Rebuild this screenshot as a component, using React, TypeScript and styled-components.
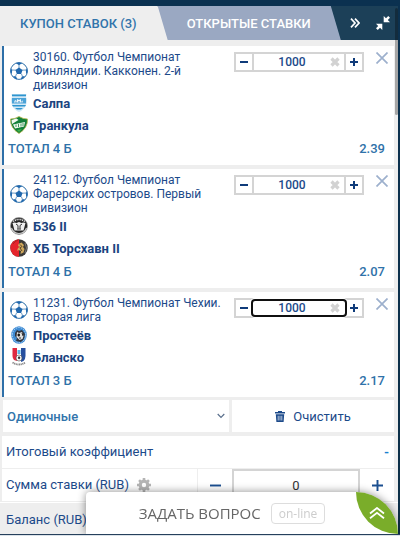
import React, { useState } from "react";
import styled, { createGlobalStyle, css } from "styled-components";

const Global = createGlobalStyle`
  * { box-sizing: border-box; }
  body { margin: 0; background: #0d3350; font-family: Roboto, "Liberation Sans", sans-serif; font-size: 13px; color: #1c4a8a; }
  button, input, select { font: inherit; color: inherit; margin: 0; padding: 0; border: 0; background: none; border-radius: 0; }
  button { cursor: pointer; }
  svg { display: block; flex: none; }
`;

const Page = styled.div`
  min-height: 100vh;
  padding: 6px 2px 0 0;
  background: linear-gradient(#0b3150, #0d3048);
  display: flex;
`;

const Panel = styled.main`
  position: relative;
  flex: 1;
  min-width: 0;
  background: #eee;
`;

const Header = styled.header`
  display: flex;
  height: 34px;
  background: #1c4058;
`;

const Tab = styled.button<{ $active?: boolean }>`
  height: ${(p) => (p.$active ? 40 : 34)}px;
  padding: ${(p) => (p.$active ? "0 31px 6px 20px" : "0 30px 0 29px")};
  margin-right: ${(p) => (p.$active ? -10 : 0)}px;
  white-space: nowrap;
  font-weight: 500;
  text-transform: uppercase;
  color: ${(p) => (p.$active ? "#3174ab" : "#fff")};
  background: ${(p) => (p.$active ? "#eee" : "#9aa8c2")};
  clip-path: polygon(0 0, calc(100% - 10px) 0, 100% 34px, 100% 100%, 0 100%);
  z-index: ${(p) => (p.$active ? 1 : 0)};
`;

const HeaderTools = styled.div`
  display: flex;
  flex: 1;
  align-items: center;
  justify-content: flex-end;
  gap: 16px;
  padding-right: 8px;
  color: #fff;
`;

const IconButton = styled.button`
  display: flex;
  align-items: center;
  justify-content: center;
`;

const ScrollThumb = styled.div`
  position: absolute;
  top: 2px;
  right: 0;
  width: 3px;
  height: 107px;
  border-radius: 2px;
  background: rgba(0, 0, 0, 0.3);
  z-index: 2;
`;

const Slip = styled.div`
  display: flex;
  flex-direction: column;
  gap: 4px;
  padding: 6px 4px 0 2px;
`;

const Card = styled.article`
  padding: 4px 6px 5px 4px;
  border-left: 2px solid #2d6fa8;
  background: #fff;
`;

const CardTop = styled.div`
  display: flex;
  align-items: flex-start;
`;

const Event = styled.div`
  display: flex;
  flex: 1;
  min-width: 0;
  align-items: center;
  gap: 5px;
  padding-left: 2px;
`;

const Title = styled.h2`
  flex: 1;
  margin: 0;
  font-size: 12px;
  line-height: 14px;
  font-weight: 400;
`;

const Stepper = styled.div`
  display: flex;
  flex: none;
  width: 130px;
  height: 20px;
  margin: 2px 12px 0 8px;
  border: 2px solid #d4d4d4;
`;

const StepButton = styled.button`
  display: flex;
  width: 16px;
  align-items: center;
  justify-content: center;
  color: #0f3b7a;
`;

const Field = styled.label<{ $focused?: boolean }>`
  display: flex;
  flex: 1;
  min-width: 0;
  align-items: center;
  padding-right: 4px;
  border: solid #d4d4d4;
  border-width: 0 2px;
  background: #fff;
  ${(p) =>
    p.$focused &&
    css`
      border-color: #fff;
      border-radius: 3px;
      outline: 2px solid #101010;
      outline-offset: -1px;
      box-shadow: 0 0 0 2px #fff;
    `}
`;

const StakeInput = styled.input`
  flex: 1;
  min-width: 0;
  text-align: center;
  font-size: 12px;
  font-weight: 500;
  line-height: 16px;
  outline: none;
`;

const CloseButton = styled(IconButton)`
  width: 12px;
  height: 12px;
  margin-top: 2px;
  color: #9db0cd;
`;

const Team = styled.div`
  display: flex;
  height: 22px;
  align-items: center;
  gap: 5px;
  padding-left: 2px;
  font-weight: 700;
  color: #1b4480;
`;

const Outcome = styled.div`
  display: flex;
  height: 24px;
  align-items: center;
  justify-content: space-between;
  padding-right: 3px;
  font-weight: 500;
  color: #2f72a9;
`;

const Actions = styled.div`
  display: grid;
  grid-template-columns: 226fr 162fr;
  gap: 3px;
  height: 32px;
  margin: -1px 0 0 1px;
`;

const SelectBox = styled.label`
  display: flex;
  align-items: center;
  padding-right: 4px;
  background: #fff;
  color: #1b4480;
`;

const TypeSelect = styled.select`
  flex: 1;
  height: 32px;
  padding-left: 4px;
  margin-right: -9px;
  appearance: none;
  font-weight: 500;
  color: #3174ab;
`;

const ClearButton = styled(IconButton)`
  gap: 8px;
  background: #fff;
`;

const Totals = styled.dl`
  display: grid;
  gap: 1px;
  margin: 0;
`;

const Line = styled.div`
  display: flex;
  height: 32px;
  align-items: center;
  background: #fff;
`;

const Term = styled.dt<{ $half?: boolean }>`
  display: flex;
  flex: ${(p) => (p.$half ? "none" : "1")};
  width: ${(p) => (p.$half ? "50%" : "auto")};
  height: 32px;
  align-items: center;
  gap: 8px;
  padding: 0 0 1px 4px;
  border-right: ${(p) => (p.$half ? "1px solid #eee" : "0")};
`;

const Coefficient = styled.dd`
  margin: 0 5px;
  font-weight: 700;
  color: #1a7fd0;
`;

const SumControl = styled.dd`
  display: flex;
  flex: 1;
  min-width: 0;
  height: 32px;
  margin: 0;
`;

const BigStep = styled(IconButton)`
  flex: none;
  width: 34px;
  color: #1b4f90;
`;

const SumInput = styled.input`
  flex: 1;
  min-width: 0;
  height: 32px;
  border: 2px solid #d4d4d4;
  text-align: center;
  color: #333;
`;

const Balance = styled.div`
  display: flex;
  height: 34px;
  align-items: center;
  margin: 0 -4px 0 -2px;
  padding: 0 6px;
  border-top: 1px solid #fff;
`;

const Chat = styled.aside`
  position: fixed;
  right: 2px;
  bottom: 2px;
  left: 86px;
  display: flex;
  height: 42px;
  border-radius: 4px 42px 0 0;
  background: #fff;
  box-shadow: 0 0 8px rgba(0, 0, 0, 0.45);
`;

const ChatButton = styled.button`
  display: flex;
  flex: 1;
  align-items: center;
  justify-content: center;
  gap: 10px;
  padding-left: 38px;
  padding-right: 16px;
  font-family: "Open Sans", "Noto Sans", sans-serif;
  font-size: 15px;
  white-space: nowrap;
  color: #666;
`;

const Online = styled.span`
  padding: 0 7px;
  border: 1px solid #ddd;
  border-radius: 4px;
  font-size: 12px;
  font-weight: 400;
  line-height: 19px;
  color: #ccc;
`;

const UpButton = styled(IconButton)`
  width: 42px;
  height: 42px;
  border-radius: 0 42px 0 42px;
  background: #7aad2a;
  color: #fff;
`;

const BottomEdge = styled.div`
  position: fixed;
  right: 0;
  bottom: 0;
  left: 0;
  height: 2px;
  border-top: 1px solid #26405c;
  background: #dbe2e8;
`;

const Ball = () => (
  <svg width="18" height="18" viewBox="0 0 18 18">
    <circle cx="9" cy="9" r="8.4" fill="#fff" stroke="#2d6fa8" strokeWidth="1" />
    <g fill="#2068ae">
      <path d="M9 5.4l3.5 2.5-1.3 4.1H6.8L5.5 7.9z" />
      <path d="M5.7 1.1Q9-.2 12.3 1.1L9 3.2zM.7 6.2l1.5 1.9-.4 3.8L.5 10.5zM17.3 6.2l-1.5 1.9.4 3.8 1.3-1.4zM3.2 14l3 .4 1 3-2.5-1zM14.8 14l-3 .4-1 3 2.5-1z" />
    </g>
    <path d="M9 3v3M2 8l4 .2M16 8l-4 .2M6.5 12l-1 2.5M11.5 12l1 2.5" stroke="#2d6fa8" strokeWidth=".7" />
  </svg>
);

const Salpa = () => (
  <svg width="18" height="18" viewBox="0 0 18 18">
    <path d="M1.5 0h15l-.5 3 1 2c0 7-3 11-8 13C4 16 1 12 1 5l1-2z" fill="#d3e9f6" />
    <path d="M2 .5h14v1.700H2zM2 11h14l-1 1.500H3zM5 14h8l-2 1.500H7z" fill="#2e95cf" />
    <path d="M2 4h14v5.500H2z" fill="#4ba3d8" />
    <path d="M4 8.500l1-2.500 2 1V5l2 1 2-1v2.500l2-1v2z" fill="#eef8fd" />
    <path d="M6 8.500V7.500M9 8.500V7M12 8.500V7.500" stroke="#2e7fb8" />
  </svg>
);

const Grankulla = () => (
  <svg width="18" height="18" viewBox="0 0 18 18">
    <path d="M.5 3Q5 3 9 .5 13 3 17.500 3 18 12 9 17.500 0 12 .5 3z" fill="#13803a" stroke="#b7b74c" strokeWidth=".8" />
    <path d="M1.500 4l5-1.500L8.500 4 2 8z" fill="#f3f8ef" />
    <path d="M3 8.500l12-2.500-1 4.500-9 2z" fill="#f3f8ef" />
    <path d="M6 8.500v2.500M8.500 8v3M11 7.500v3M13 7v3" stroke="#13803a" strokeWidth=".8" />
    <path d="M7 14l5-1-3 3z" fill="#42b449" />
  </svg>
);

const B36 = () => (
  <svg width="18" height="18" viewBox="0 0 18 18">
    <circle cx="9" cy="9" r="8.500" fill="#252525" stroke="#999" strokeWidth=".6" />
    <path d="M3 4.500q6-4 12 0" fill="none" stroke="#ddd" strokeWidth="1.500" strokeDasharray="1.200 .7" />
    <path d="M2.500 6q2-1 4 0L9 5l2.500 1q2-1 4 0L13.500 13.500h-9z" fill="#eee" />
    <path d="M6 7l2 1.500v3M12 7l-2 1.500v3M7 12h4" fill="none" stroke="#333" />
    <path d="M1.500 11q2 5.500 7.500 5.500T16.500 11" fill="none" stroke="#ccc" strokeWidth="1.200" />
  </svg>
);

const Torshavn = () => (
  <svg width="18" height="18" viewBox="0 0 18 18">
    <circle cx="9" cy="9" r="8.700" fill="#3c3a38" />
    <path d="M9 .3A8.700 8.700 0 0 0 9 17.700z" fill="#e5242c" />
    <path d="M3 5q2-3 5-4" fill="none" stroke="#a22" strokeWidth="1" />
    <path d="M15 4q3 5 0 10" fill="none" stroke="#888" strokeWidth=".8" />
    <path d="M8.500 5l3-1.500L14 6l-1 2 1.500 2-1 3.500-3 1.500.5-3L8.500 11 7 12l1-3 2-1-2-1z" fill="#cfa85c" />
    <path d="M10 5.500l2 2-2 1.500 2 3" fill="none" stroke="#4a3825" strokeWidth=".9" />
  </svg>
);

const Prostejov = () => (
  <svg width="18" height="18" viewBox="0 0 18 18">
    <ellipse cx="9" cy="9" rx="7.800" ry="8.700" fill="#3e8bd3" />
    <ellipse cx="9" cy="9" rx="6.700" ry="7.500" fill="none" stroke="#b9dafa" strokeDasharray="1.500 1" />
    <path d="M5 7l2-3 2 1 3-1 3 4-1 5-3 3-5-1 1-3-2-2z" fill="#30353f" />
    <path d="M7 6l2 1 3-1 1.500 4-1 3-3 1-3-3z" fill="#dedede" />
    <path d="M8 8h1.500v2H8zM12 7l1 3M9 12h2" stroke="#222" strokeWidth=".9" />
  </svg>
);

const Blansko = () => (
  <svg width="18" height="18" viewBox="0 0 18 18">
    <path d="M2.500 0h13v9q0 5-6.500 8-6.500-3-6.500-8z" fill="#fff" />
    <path d="M2.500 0H7v13L4 12q-1.500-2-1.500-4z" fill="#df2940" />
    <path d="M11 0h4.500v8q0 3-2 5L11 14z" fill="#264f9e" />
    <path d="M7.500 2h3v4h-3z" fill="#5db4e4" />
    <circle cx="9" cy="10" r="3" fill="#fff" stroke="#444" strokeWidth=".6" />
    <path d="M8.300 8.500h1.500l.6 1.500-1.300 1.500L7.700 10z" fill="#333" />
    <path d="M2.500 14.500q6.500 4 13 0" fill="none" stroke="#888" strokeWidth="1.800" strokeDasharray="1.200 .5" />
  </svg>
);

const Minus = ({ size = 8 }: { size?: number }) => (
  <svg width={size} height={size} viewBox="0 0 8 8"><path d="M0 4h8" stroke="currentColor" strokeWidth={size > 8 ? 1.4 : 2} /></svg>
);

const Plus = ({ size = 8 }: { size?: number }) => (
  <svg width={size} height={size} viewBox="0 0 8 8"><path d="M0 4h8M4 0v8" stroke="currentColor" strokeWidth={size > 8 ? 1.4 : 2} /></svg>
);

const Cross = () => (
  <svg width="12" height="12" viewBox="0 0 12 12"><path d="M.5.5l11 11M11.500.5l-11 11" stroke="currentColor" strokeWidth="1.700" /></svg>
);

const ClearX = () => (
  <svg width="10" height="10" viewBox="0 0 10 10"><path d="M1.500 1.500l7 7M8.500 1.500l-7 7" stroke="#d2d2d2" strokeWidth="3.200" /></svg>
);

const DoubleRight = () => (
  <svg width="10" height="10" viewBox="0 0 10 10" fill="none" stroke="currentColor" strokeWidth="1.700"><path d="M1 .7L5 5 1 9.300M5 .7L9 5 5 9.300" /></svg>
);

const Collapse = () => (
  <svg width="14" height="14" viewBox="0 0 14 14">
    <path d="M14 1.800L12.200 0 10 2.200 7.700 0v6.300H14L11.800 4zM0 12.200L1.800 14 4 11.800 6.300 14V7.700H0L2.200 10z" fill="currentColor" />
  </svg>
);

const Chevron = () => (
  <svg width="8" height="6" viewBox="0 0 8 6" fill="none" stroke="#5a6f8c" strokeWidth="1.200"><path d="M.7 1L4 4.300 7.300 1" /></svg>
);

const Trash = () => (
  <svg width="10" height="11" viewBox="0 0 10 11">
    <path d="M0 1h3V0h4v1h3v1.500H0zM.8 3.300h8.400L8.600 11H1.400z" fill="currentColor" />
    <path d="M3.200 4.800v4.700M5 4.800v4.700M6.800 4.800v4.700" stroke="#fff" strokeWidth=".7" />
  </svg>
);

const Gear = () => (
  <svg width="14" height="14" viewBox="0 0 14 14" fill="none" stroke="#b4b4b4">
    <circle cx="7" cy="7" r="3.800" strokeWidth="3.200" />
    <path d="M7 0v3M7 11v3M0 7h3M11 7h3M2.050 2.050l2 2M9.950 9.950l2 2M11.950 2.050l-2 2M4.050 9.950l-2 2" strokeWidth="2.600" />
  </svg>
);

const DoubleUp = () => (
  <svg width="16" height="12" viewBox="0 0 16 12" fill="none" stroke="currentColor" strokeWidth="1.800"><path d="M1 6.500L8 1l7 5.500M1 11.300l7-5.500 7 5.500" /></svg>
);

interface Bet {
  title: string;
  teams: [string, () => React.JSX.Element][];
  outcome: string;
  odds: string;
  focused?: boolean;
}

const bets: Bet[] = [
  { title: "30160. Футбол Чемпионат Финляндии. Какконен. 2-й дивизион", teams: [["Салпа", Salpa], ["Гранкула", Grankulla]], outcome: "ТОТАЛ 4 Б", odds: "2.39" },
  { title: "24112. Футбол Чемпионат Фарерских островов. Первый дивизион", teams: [["Б36 II", B36], ["ХБ Торсхавн II", Torshavn]], outcome: "ТОТАЛ 4 Б", odds: "2.07" },
  { title: "11231. Футбол Чемпионат Чехии. Вторая лига", teams: [["Простеёв", Prostejov], ["Бланско", Blansko]], outcome: "ТОТАЛ 3 Б", odds: "2.17", focused: true },
];

const BetCard = ({ bet }: { bet: Bet }) => {
  const [stake, setStake] = useState(1000);
  return (
    <Card>
      <CardTop>
        <Event><Ball /><Title>{bet.title}</Title></Event>
        <Stepper>
          <StepButton aria-label="Уменьшить" onClick={() => setStake(Math.max(0, stake - 100))}><Minus /></StepButton>
          <Field $focused={bet.focused}>
            <StakeInput aria-label="Ставка" value={stake} onChange={(e) => setStake(Number(e.target.value) || 0)} />
            <IconButton aria-label="Сбросить" onClick={() => setStake(0)}><ClearX /></IconButton>
          </Field>
          <StepButton aria-label="Увеличить" onClick={() => setStake(stake + 100)}><Plus /></StepButton>
        </Stepper>
        <CloseButton aria-label="Удалить"><Cross /></CloseButton>
      </CardTop>
      {bet.teams.map(([name, Crest]) => (
        <Team key={name}><Crest />{name}</Team>
      ))}
      <Outcome><span>{bet.outcome}</span><span>{bet.odds}</span></Outcome>
    </Card>
  );
};

export default function App() {
  const [sum, setSum] = useState(0);
  return (
    <>
      <Global />
      <Page>
        <Panel>
          <Header>
            <Tab $active>Купон ставок (3)</Tab>
            <Tab>Открытые ставки</Tab>
            <HeaderTools>
              <IconButton aria-label="Далее"><DoubleRight /></IconButton>
              <IconButton aria-label="Свернуть"><Collapse /></IconButton>
            </HeaderTools>
          </Header>
          <ScrollThumb />
          <Slip>
            {bets.map((bet) => <BetCard key={bet.title} bet={bet} />)}
            <Actions>
              <SelectBox>
                <TypeSelect aria-label="Тип ставки"><option>Одиночные</option></TypeSelect>
                <Chevron />
              </SelectBox>
              <ClearButton><Trash />Очистить</ClearButton>
            </Actions>
            <Totals>
              <Line><Term>Итоговый коэффициент</Term><Coefficient>-</Coefficient></Line>
              <Line>
                <Term $half><label htmlFor="sum">Сумма ставки (RUB)</label><Gear /></Term>
                <SumControl>
                  <BigStep aria-label="Меньше" onClick={() => setSum(Math.max(0, sum - 1))}><Minus size={11} /></BigStep>
                  <SumInput id="sum" value={sum} onChange={(e) => setSum(Number(e.target.value) || 0)} />
                  <BigStep aria-label="Больше" onClick={() => setSum(sum + 1)}><Plus size={11} /></BigStep>
                </SumControl>
              </Line>
              <Balance>Баланс (RUB)</Balance>
            </Totals>
          </Slip>
        </Panel>
      </Page>
      <Chat>
        <ChatButton>ЗАДАТЬ ВОПРОС<Online>on-line</Online></ChatButton>
        <UpButton aria-label="Наверх"><DoubleUp /></UpButton>
      </Chat>
      <BottomEdge />
    </>
  );
}
